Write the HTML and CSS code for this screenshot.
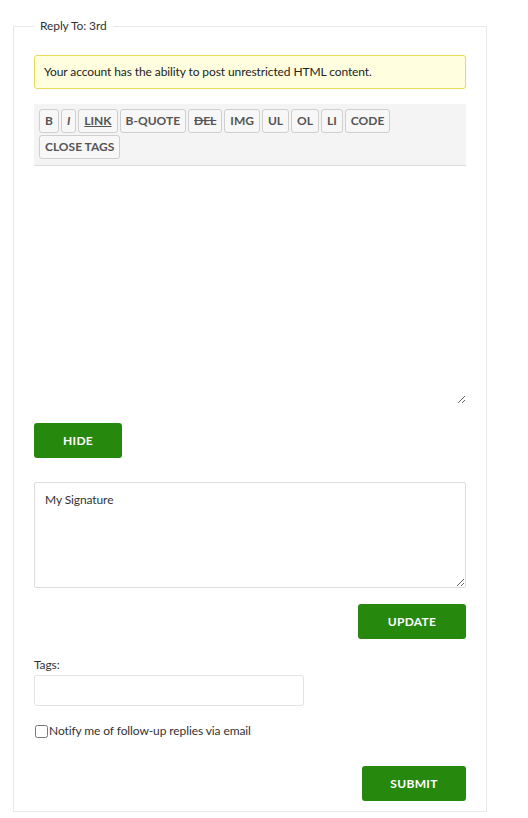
FILE: index.html
```html
<!DOCTYPE html>
<html>
<head>
<meta charset="utf-8">
<link rel="stylesheet" href="styles.css">
</head>
<body>
<div class="page">
  <fieldset class="reply">
    <legend class="reply-legend">Reply To: 3rd</legend>
    <div class="notice">Your account has the ability to post unrestricted HTML content.</div>
    <div class="editor">
      <div class="toolbar">
        <button class="qt"><b>B</b></button>
        <button class="qt"><i>I</i></button>
        <button class="qt qt-link">LINK</button>
        <button class="qt">B-QUOTE</button>
        <button class="qt qt-del">DEL</button>
        <button class="qt">IMG</button>
        <button class="qt">UL</button>
        <button class="qt">OL</button>
        <button class="qt">LI</button>
        <button class="qt">CODE</button>
        <button class="qt">CLOSE TAGS</button>
      </div>
      <textarea class="content"></textarea>
    </div>
    <div class="row-left"><button class="btn btn-hide">HIDE</button></div>
    <textarea class="signature">My Signature</textarea>
    <div class="row-right"><button class="btn btn-update">UPDATE</button></div>
    <label class="tags-label">Tags:</label>
    <input class="tags-input" type="text">
    <label class="notify"><input type="checkbox" class="notify-box"><span>Notify me of follow-up replies via email</span></label>
    <div class="row-right"><button class="btn btn-submit">SUBMIT</button></div>
  </fieldset>
</div>
</body>
</html>
```

FILE: styles.css
```css
* { box-sizing: border-box; }
html, body { margin: 0; padding: 0; background: #fff; }
body {
  font-family: Lato, "Open Sans", "Liberation Sans", sans-serif;
  font-size: 12px;
  color: #333;
  letter-spacing: -0.1px;
}
.page { padding: 18px 41px 0 13px; }
.reply {
  margin: 0;
  border: 1px solid #e8e8e8;
  padding: 21px 20px 10px 20px;
  display: flex;
  flex-direction: column;
}
.reply-legend {
  padding: 0 6px;
  font-size: 12px;
  line-height: 16px;
  color: #333;
}
.notice {
  background: #ffffe0;
  border: 1px solid #e6db55;
  border-radius: 3px;
  padding: 0 9px;
  height: 34px;
  line-height: 32px;
  color: #222;
}
.editor {
  margin-top: 15px;
  display: flex;
  flex-direction: column;
}
.toolbar {
  background: #f4f4f4;
  border-bottom: 1px solid #dcdcdc;
  padding: 5px 5px 6px 5px;
  display: flex;
  flex-wrap: wrap;
  gap: 2px 2px;
}
.qt {
  font-family: Lato, "Open Sans", "Liberation Sans", sans-serif;
  font-size: 12px;
  font-weight: bold;
  color: #555;
  background: #f7f7f7;
  border: 1px solid #cfcfcf;
  border-radius: 3px;
  height: 24px;
  padding: 0 5px;
  margin: 0;
  line-height: 22px;
}
.qt b, .qt i { font-weight: bold; }
.qt-link { text-decoration: underline; }
.qt-del { text-decoration: line-through; }
.content {
  display: block;
  width: 100%;
  height: 238px;
  border: 0;
  margin: 0;
  padding: 8px;
  font-family: inherit;
  font-size: 12px;
  outline: none;
  background: #fff;
}
.btn {
  font-family: Lato, "Open Sans", "Liberation Sans", sans-serif;
  background: #26890d;
  color: #fff;
  border: 0;
  border-radius: 3px;
  font-size: 12px;
  font-weight: bold;
  letter-spacing: 0.3px;
  height: 35px;
  margin: 0;
  padding: 0;
}
.row-left { display: flex; margin-top: 19px; }
.btn-hide { width: 88px; }
.signature {
  margin-top: 24px;
  height: 106px;
  width: 100%;
  border: 1px solid #ddd;
  border-radius: 2px;
  padding: 9px 10px;
  font-family: inherit;
  font-size: 12px;
  letter-spacing: -0.1px;
  color: #333;
  outline: none;
}
.row-right { display: flex; justify-content: flex-end; margin-top: 16px; }
.btn-update { width: 108px; }
.tags-label {
  margin-top: 19px;
  line-height: 14px;
  color: #333;
}
.tags-input {
  margin-top: 3px;
  width: 270px;
  height: 31px;
  border: 1px solid #e3e3e3;
  border-radius: 3px;
  outline: none;
}
.notify {
  margin-top: 17px;
  display: flex;
  align-items: center;
  line-height: 16px;
  color: #333;
}
.notify-box {
  margin: 0 1px 0 1px;
  width: 13px;
  height: 13px;
}
.row-right:last-child { margin-top: 27px; }
.btn-submit { width: 104px; }
```
